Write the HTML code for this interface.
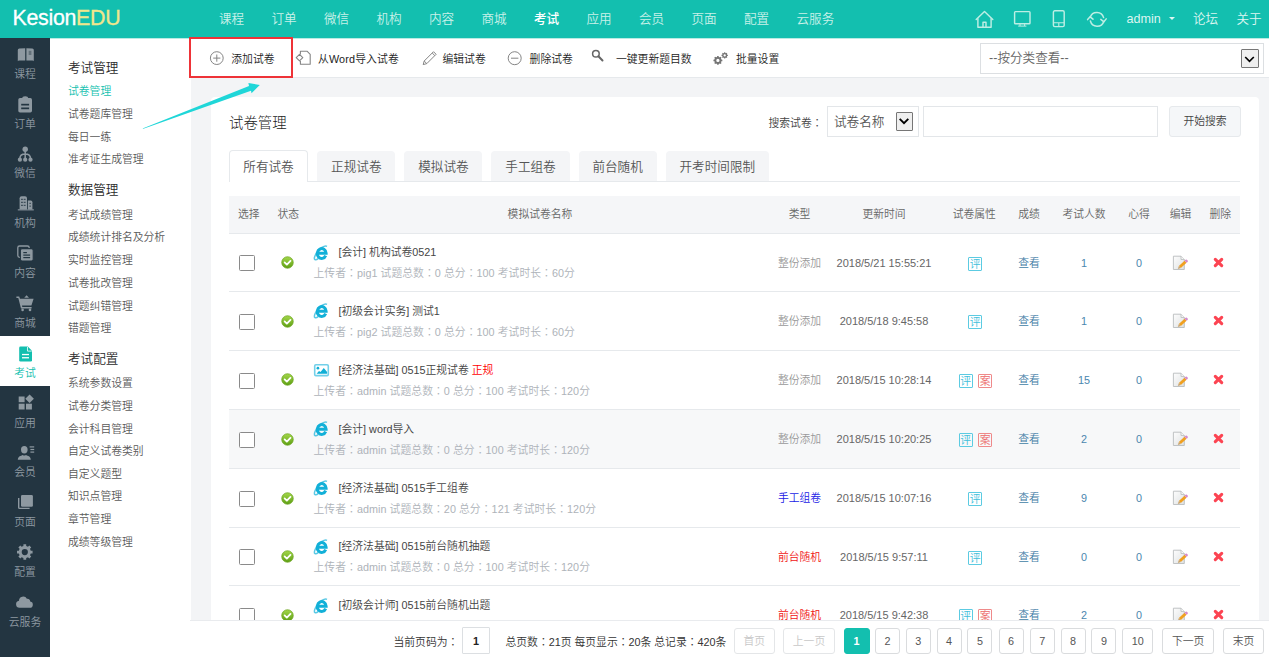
<!DOCTYPE html>
<html lang="zh-CN">
<head>
<meta charset="utf-8">
<title>KesionEDU</title>
<style>
*{box-sizing:border-box;margin:0;padding:0}
html,body{width:1269px;height:657px;overflow:hidden}
body{position:relative;background:#f3f4f6;font-family:"Liberation Sans","Noto Sans CJK SC",sans-serif;font-size:10.8px;color:#333;font-weight:350}
a{text-decoration:none}
i,em{font-style:normal}
/* header */
#hd{position:absolute;left:0;top:0;width:1269px;height:38px;background:#13bfaf;z-index:5}
#logo{position:absolute;left:12.500px;top:0;height:38px;line-height:36.500px;font-size:21.400px;color:#fff;letter-spacing:-.3px;white-space:nowrap;-webkit-text-stroke:.3px}
#logo b{font-weight:400;color:#f0e68c}
.nv{position:absolute;top:0;height:38px;line-height:38px;font-size:12.6px;color:#c9f1e9;white-space:nowrap}
.nv.on{color:#fff;font-weight:500}
.nv.r{color:#dcf6f1}
.hi{position:absolute}
.caret{position:absolute;left:1168.5px;top:17px;width:0;height:0;border-left:3.3px solid transparent;border-right:3.3px solid transparent;border-top:3.6px solid #dcf6f1}
/* left dark bar */
#lb{position:absolute;left:0;top:37px;width:50px;height:620px;background:#233541}
.li{position:absolute;left:0;width:50px;height:50px;text-align:center;color:#8e99a1;font-size:10.8px}
.li span{position:absolute;left:0;width:50px;top:28.700px;line-height:16px}
.li svg{position:absolute;left:0;top:.5px}
.li.on{background:#fff;color:#13bfaf}
/* submenu */
#sm{position:absolute;left:50px;top:38px;width:141px;height:619px;background:#fff}
#sm h3{position:absolute;left:18px;font-size:12.600px;font-weight:350;color:#2a2a2a;line-height:18px;white-space:nowrap}
#sm a{position:absolute;left:18px;font-size:10.800px;color:#5a5a5a;line-height:16px;white-space:nowrap}
#sm a.on{color:#13bfaf}
/* toolbar */
#tb{position:absolute;left:190px;top:38px;width:1079px;height:40px;background:#fff;border-bottom:1px solid #e6e9ec}
.tline{position:absolute;left:-140px;top:0;width:1219px;height:1px;background:#b9ebe3}
#redbox{position:absolute;left:-1px;top:-1px;width:104px;height:41px;border:2px solid #ee3338;z-index:6}
.tic{position:absolute}
.ti{position:absolute;top:0;height:40px;line-height:42px;font-size:10.800px;color:#1c1c1c;font-weight:350;white-space:nowrap}
#catsel{position:absolute;left:790px;top:5px;width:284px;height:31px;border:1px solid #dcdfe2;background:#fff;line-height:29px;padding-left:8px;font-size:12.600px;color:#666}
#catsel .dd{position:absolute;right:4.500px;top:4.500px;width:18px;height:19.500px;border:1px solid #767676;background:#efefef;border-radius:1px}
#catsel .dd svg{position:absolute;left:2.500px;top:6px}
/* panel */
#pn{position:absolute;left:211px;top:97px;width:1048px;height:540px;background:#fff;border-radius:4px 4px 0 0;overflow:hidden}
#ttl{position:absolute;left:18px;top:15px;line-height:22px;font-size:14.400px;color:#222;font-weight:300}
#srch .lbl{position:absolute;left:557.500px;top:16px;line-height:18px;font-size:10.800px;color:#444;white-space:nowrap}
#srch .sel{position:absolute;left:616px;top:8.500px;width:92px;height:31px;border:1px solid #e3e6e9;line-height:31px;padding-left:6px;font-size:12.600px;color:#555}
#srch .sel .dd{position:absolute;left:68.300px;top:5.500px;width:17px;height:19px;border:1px solid #767676;background:#efefef;border-radius:1px}
#srch .sel .dd svg{position:absolute;left:2.200px;top:5px}
#srch .inp{position:absolute;left:711.500px;top:8.500px;width:235px;height:31px;border:1px solid #e3e6e9;background:#fff}
#srch .btn{position:absolute;left:958px;top:8.500px;width:72px;height:31px;border:1px solid #e6e9ec;background:#f5f7f9;border-radius:3px;line-height:29px;text-align:center;font-size:10.800px;color:#444}
#tabs{position:absolute;left:0;top:53px;width:1047px;height:32px}
#tabs:after{content:"";position:absolute;left:18px;top:31px;width:1011px;height:1px;background:#e6e9ec}
.tab{position:absolute;top:.5px;height:30.500px;line-height:33.500px;text-align:center;font-size:12.600px;color:#555;background:#f4f5f7;border-radius:4px 4px 0 0}
.tab.on{background:#fff;border:1px solid #e6e9ec;border-bottom:0;height:32px;z-index:2;line-height:32.500px;top:0}
#th{position:absolute;left:18px;top:99px;width:1011px;height:38px;background:#f5f6f8;border-bottom:1px solid #e6e9ec}
.c{position:absolute;width:80px;text-align:center;white-space:nowrap}
#th .c{top:0;line-height:37px;font-size:10.800px;color:#666}
.row{position:absolute;left:18px;width:1011px;height:59px;border-bottom:1px solid #e6e9ec;background:#fff}
.row.alt{background:#f7f8f9}
.row .c{top:0;line-height:58.400px;font-size:10.800px}
.cb{position:absolute;left:10px;top:21px;width:16px;height:16px;border:1px solid #8a8a8a;border-radius:1.500px;background:#fff}
.ok{position:absolute;left:52px;top:21.800px;width:13px;height:13px}
.ok svg,.ed svg,.dl svg,.fi svg{display:block}
.nm{position:absolute;left:84.500px;top:8.300px;line-height:20px;white-space:nowrap}
.nm .fi{position:absolute;left:-1.500px;top:1.300px}
.nm .t{display:block;padding-left:25px;font-size:10.800px;color:#444;height:20px;line-height:21px}
.nm .t em{color:#f00}
.nm p{font-size:10.800px;color:#aeb3b9;line-height:20px;margin-top:-.300px;letter-spacing:.05px}
.t0{color:#999}.t1{color:#1a1ae6}.t2{color:#f01414}
.dt{color:#666;font-size:11px !important}
.bd{position:absolute;top:22.600px;width:14px;height:14px;border:1px solid;font-size:10.800px;line-height:12px;text-align:center;border-radius:1px;overflow:hidden}
.bd.p{color:#3fc0db;border-color:#5ccbe2}
.bd.a{color:#ec6a6a;border-color:#ef8a8a}
.lk{color:#3f7da6}
.nu{color:#4a86ae}
.ed{position:absolute;left:943px;top:21px}
.dl{position:absolute;left:983.900px;top:23px}
/* footer */
#ft{position:absolute;left:190px;top:620px;width:1079px;height:37px;background:#fff;border-top:1px solid #e9ebee;z-index:4}
.ftx{position:absolute;top:7px;line-height:26px;font-size:10.800px;color:#333;white-space:nowrap}
.pg{position:absolute;top:7px;height:26px;line-height:24px;border:1px solid #dadcde;border-radius:3px;background:#fff;text-align:center;font-size:10.800px;color:#555}
.pg.dis{color:#c8c8c8;border-color:#e4e6e8}
.pg.on{background:#13bfaf;border-color:#13bfaf;color:#fff;font-weight:700}
.k{font-family:"Noto Sans CJK TC","Noto Sans CJK JP",sans-serif}
.pg.cur{top:6px;height:27px;line-height:26px;border-radius:1px;font-weight:700;color:#222;border-color:#dcdfe2}
.in{position:absolute;left:0;width:1011px;height:58px}
</style>
</head>
<body>
<div id="hd">
<div id="logo">Kesion<b>EDU</b></div>
<a class="nv" style="left:219.0px">课程</a>
<a class="nv" style="left:271.5px">订单</a>
<a class="nv" style="left:324.0px">微信</a>
<a class="nv" style="left:376.5px">机构</a>
<a class="nv" style="left:429.0px">内容</a>
<a class="nv" style="left:481.5px">商城</a>
<a class="nv on" style="left:534.0px">考试</a>
<a class="nv" style="left:586.5px">应用</a>
<a class="nv" style="left:639.0px">会员</a>
<a class="nv" style="left:691.5px">页面</a>
<a class="nv" style="left:744.0px">配置</a>
<a class="nv" style="left:796.5px">云服务</a>
<svg class="hi" style="left:974px;top:9px" width="21" height="21" viewBox="0 0 21 21" fill="none" stroke="#bdeee4" stroke-width="1.45" stroke-linejoin="round" stroke-linecap="round"><path d="M2.2 10.6L10.5 2.6l8.3 8"/><path d="M3.9 9.6v8.6h13.2V9.6"/><path d="M9 18.2v-5h3v5"/></svg>
<svg class="hi" style="left:1012px;top:9px" width="21" height="21" viewBox="0 0 21 21" fill="none" stroke="#bdeee4" stroke-width="1.45" stroke-linejoin="round"><rect x="2.6" y="2.6" width="15.4" height="12.2" rx=".8"/><path d="M6.2 17.1h8.2M8 15v2M12.600 15v2" stroke-width="1"/></svg>
<svg class="hi" style="left:1050px;top:9px" width="18" height="21" viewBox="0 0 18 21" fill="none" stroke="#bdeee4" stroke-width="1.45"><rect x="3.4" y="1.8" width="10.8" height="15.8" rx="1.4"/><path d="M3.400 13.700h10.800M8.800 13.700v3.900" stroke-width="1.1"/></svg>
<svg class="hi" style="left:1085px;top:9px" width="24" height="21" viewBox="0 0 24 21" fill="none" stroke="#bdeee4" stroke-width="1.5" stroke-linecap="round" stroke-linejoin="round"><path d="M5.2 8.200A7 7 0 0 1 18.600 8.600"/><path d="M18.800 12.400A7 7 0 0 1 5.400 12"/><path d="M2.600 10.600l2.500-2.800 2.900 2.400"/><path d="M15.800 10.400l3.100 2.400 2.300-2.900"/></svg>

<a class="nv r" style="left:1126.5px">admin</a><i class="caret"></i>
<a class="nv r" style="left:1193px">论坛</a>
<a class="nv r" style="left:1236.5px">关于</a>
</div>
<div id="lb">
<div class="li" style="top:0.0px"><svg width="50" height="30" viewBox="0 0 50 30" fill="#8e99a1"><path d="M17.800 12q0-1.500 1.500-1.600l5.900-.2v12.200l-5.900.2q-1.500.1-1.500.7z"/><path d="M33.800 12q0-1.500-1.500-1.600l-5.900-.2v12.200l5.900.2q1.500.1 1.500.7z"/><rect x="28.700" y="12.800" width="2.700" height="4.200" fill="#233541" opacity=".4"/></svg><span>课程</span></div>
<div class="li" style="top:49.85px"><svg width="50" height="30" viewBox="0 0 50 30" fill="#8e99a1"><rect x="18.300" y="11" width="13.700" height="14.400" rx="1.700"/><path d="M22.200 12.600v-1.200q0-2.200 3-2.200t3 2.200v1.200z"/><rect x="21.200" y="16.800" width="7.900" height="1.700" fill="#233541"/><rect x="21.200" y="20.500" width="7.900" height="1.700" fill="#233541"/></svg><span>订单</span></div>
<div class="li" style="top:99.7px"><svg width="50" height="30" viewBox="0 0 50 30" fill="#8e99a1"><circle cx="25.200" cy="12.300" r="2.700"/><circle cx="19.900" cy="22.700" r="2.100"/><circle cx="25.200" cy="22.700" r="2.100"/><circle cx="30.500" cy="22.700" r="2.100"/><path d="M25.200 14v7M19.900 21.500q0-4.500 5.300-4.500t5.300 4.500" fill="none" stroke="#8e99a1" stroke-width="1.500"/></svg><span>微信</span></div>
<div class="li" style="top:149.55px"><svg width="50" height="30" viewBox="0 0 50 30" fill="#8e99a1"><path d="M19.600 11.200q0-2 2-2h3.400q2 0 2 2v11.400h-7.400z"/><path d="M27.600 13.600h3.200q1.600 0 1.600 1.600v7.400h-4.800z"/><rect x="17.800" y="22.300" width="16" height="1.100"/><g fill="#233541" opacity=".8"><rect x="21" y="11.800" width="1.900" height="1.100"/><rect x="23.700" y="11.800" width="1.900" height="1.100"/><rect x="21" y="14.800" width="1.900" height="1.100"/><rect x="23.700" y="14.800" width="1.900" height="1.100"/><rect x="21" y="17.800" width="1.900" height="1.100"/><rect x="23.700" y="17.800" width="1.900" height="1.100"/><rect x="29.400" y="15.800" width="1.500" height="1.100"/><rect x="29.400" y="18.600" width="1.500" height="1.100"/><rect x="27" y="10" width=".7" height="12.400"/></g></svg><span>机构</span></div>
<div class="li" style="top:199.4px"><svg width="50" height="30" viewBox="0 0 50 30" fill="#8e99a1"><rect x="17.800" y="9" width="11.400" height="11.400" rx="1.800" fill="none" stroke="#8e99a1" stroke-width="1.300"/><rect x="20.400" y="11.600" width="12.800" height="12.500" rx="1.800" stroke="#233541" stroke-width="1.100"/><g fill="#233541"><rect x="23.300" y="15" width="3.600" height="1.200"/><rect x="23.300" y="17.500" width="6.800" height="1.200"/><rect x="23.300" y="20" width="6.800" height="1.200"/></g></svg><span>内容</span></div>
<div class="li" style="top:249.25px"><svg width="50" height="30" viewBox="0 0 50 30" fill="#8e99a1"><path d="M16.400 9.400h2.800l.8 2.400h13.600l-2.200 6.800h-9.400l.3 1.300h9.300v1.500h-10.600l-2.700-10.500h-1.900z"/><circle cx="22.600" cy="22.900" r="1.300"/><circle cx="30" cy="22.900" r="1.300"/><path d="M26.600 8.200l2.400 2.500h-4.800z"/></svg><span>商城</span></div>
<div class="li on" style="top:299.1px"><svg width="50" height="30" viewBox="0 0 50 30" fill="#13bfaf"><path d="M20.500 9.600h7.300l4.200 4.200v9.400q0 1.300-1.300 1.300h-10.200q-1.300 0-1.300-1.300v-12.300q0-1.300 1.300-1.300z"/><path d="M27.500 9.900v4.200h4.200" fill="none" stroke="#fff" stroke-width=".8"/><rect x="22" y="16.900" width="7" height="1.300" fill="#fff"/><rect x="22" y="20.100" width="7" height="1.300" fill="#fff"/></svg><span>考试</span></div>
<div class="li" style="top:348.95px"><svg width="50" height="30" viewBox="0 0 50 30" fill="#8e99a1"><rect x="18.700" y="10.500" width="5.900" height="5.700"/><rect x="18.700" y="17.700" width="5.900" height="5.800"/><rect x="26" y="17.700" width="5.900" height="5.800"/><path d="M29.600 8.500l4.300 4.300-4.300 4.300-4.300-4.300z"/></svg><span>应用</span></div>
<div class="li" style="top:398.8px"><svg width="50" height="30" viewBox="0 0 50 30" fill="#8e99a1"><ellipse cx="24.300" cy="13.700" rx="3.300" ry="3.700"/><path d="M17.800 23.800q0-3.200 3.300-4.100l1.600-.7q1.600 1 3.200 0l1.600.7q3.300.9 3.300 4.100z"/><rect x="29.600" y="10.300" width="4.600" height="1.200"/><rect x="30.400" y="12.900" width="3.800" height="1.200"/><rect x="30.400" y="15.500" width="3.800" height="1.200"/></svg><span>会员</span></div>
<div class="li" style="top:448.65px"><svg width="50" height="30" viewBox="0 0 50 30" fill="#8e99a1"><rect x="21" y="9" width="11.900" height="11.700" rx="1.300"/><path d="M18.700 12v9.500q0 .9.900.9h10" fill="none" stroke="#8e99a1" stroke-width="1.400"/></svg><span>页面</span></div>
<div class="li" style="top:498.5px"><svg width="50" height="30" viewBox="0 0 50 30" fill="#8e99a1"><path fill-rule="evenodd" d="M32.58 14.69L32.58 17.41L30.73 17.47L30.00 19.24L31.26 20.59L29.34 22.51L27.99 21.25L26.22 21.98L26.16 23.83L23.44 23.83L23.38 21.98L21.61 21.25L20.26 22.51L18.34 20.59L19.60 19.24L18.87 17.47L17.02 17.41L17.02 14.69L18.87 14.63L19.60 12.86L18.34 11.51L20.26 9.59L21.61 10.85L23.38 10.12L23.44 8.27L26.16 8.27L26.22 10.12L27.99 10.85L29.34 9.59L31.26 11.51L30.00 12.86L30.73 14.63zM21.70 16.05a3.1 3.1 0 1 0 6.2 0a3.1 3.1 0 1 0 -6.2 0z"/></svg><span>配置</span></div>
<div class="li" style="top:548.35px"><svg width="50" height="30" viewBox="0 0 50 30" fill="#8e99a1"><path d="M19.500 21.800a3.500 3.500 0 0 1-.5-6.950a4.200 4.200 0 0 1 7.900-2.100a3 3 0 0 1 3.300 2.700a3.200 3.200 0 0 1-.6 6.350z"/></svg><span>云服务</span></div>
</div>
<div id="sm">
<h3 style="top:20.7px">考试管理</h3>
<a style="top:45.0px" class=on>试卷管理</a>
<a style="top:67.8px">试卷题库管理</a>
<a style="top:90.6px">每日一练</a>
<a style="top:113.4px">准考证生成管理</a>
<h3 style="top:143.3px">数据管理</h3>
<a style="top:168.5px">考试成绩管理</a>
<a style="top:191.3px">成绩统计排名及分析</a>
<a style="top:214.0px">实时监控管理</a>
<a style="top:236.8px">试卷批改管理</a>
<a style="top:259.5px">试题纠错管理</a>
<a style="top:282.3px">错题管理</a>
<h3 style="top:311.9px">考试配置</h3>
<a style="top:337.2px">系统参数设置</a>
<a style="top:359.8px">试卷分类管理</a>
<a style="top:382.5px">会计科目管理</a>
<a style="top:405.1px">自定义试卷类别</a>
<a style="top:427.8px">自定义题型</a>
<a style="top:450.4px">知识点管理</a>
<a style="top:473.1px">章节管理</a>
<a style="top:495.8px">成绩等级管理</a>
</div>
<div id="tb">
<i class="tline"></i>
<div id="redbox"></div>
<svg class="tic" style="left:18px;top:12px" width="18" height="18" viewBox="0 0 18 18" fill="none" stroke="#858585" stroke-width="1"><circle cx="8.800" cy="8.100" r="6.400"/><path d="M5.200 8.100h7.200M8.800 4.500v7.200"/></svg>
<span class="ti" style="left:41.300px">添加试卷</span>
<svg class="tic" style="left:104px;top:11px" width="20" height="18" viewBox="0 0 20 18" fill="none" stroke="#858585" stroke-width="1.100" stroke-linejoin="round"><path d="M6.400 5.600v-3.400h6.600l3.200 3.200v9.800h-9.800v-3.200"/><path d="M2.200 8.600l3.300-3.300 3.300 3.300-3.300 3.300z"/></svg>
<span class="ti" style="left:128px;letter-spacing:.15px">从Word导入试卷</span>
<svg class="tic" style="left:231px;top:12px" width="18" height="18" viewBox="0 0 18 18" fill="none" stroke="#858585" stroke-width="1" stroke-linejoin="round"><path d="M2.200 14.600l1-3.600 9.300-9.300 2.600 2.600-9.300 9.300z"/><path d="M3.200 11l2.600 2.600M11.200 3l2.600 2.600"/></svg>
<span class="ti" style="left:252.500px">编辑试卷</span>
<svg class="tic" style="left:316px;top:12px" width="18" height="18" viewBox="0 0 18 18" fill="none" stroke="#858585" stroke-width="1"><circle cx="8.700" cy="8.200" r="6.500"/><path d="M5 8.200h7.400"/></svg>
<span class="ti" style="left:339.600px">删除试卷</span>
<svg class="tic" style="left:400px;top:10px" width="16" height="16" viewBox="0 0 16 16" fill="none" stroke="#666" stroke-width="1.500"><circle cx="5.900" cy="5.700" r="3.300"/><path d="M8.400 8.200l4.100 4.300" stroke-width="2" stroke-linecap="round"/></svg>
<span class="ti" style="left:426px">一键更新题目数</span>
<svg class="tic" style="left:522px;top:13px" width="18" height="16" viewBox="0 0 18 16" fill="#757575"><g transform="translate(5.900 9.400) scale(4.500)"><path fill-rule="evenodd" d="M0.99 -0.17L0.99 0.17L0.78 0.19L0.68 0.42L0.82 0.58L0.58 0.82L0.42 0.68L0.19 0.78L0.17 0.99L-0.17 0.99L-0.19 0.78L-0.42 0.68L-0.58 0.82L-0.82 0.58L-0.68 0.42L-0.78 0.19L-0.99 0.17L-0.99 -0.17L-0.78 -0.19L-0.68 -0.42L-0.82 -0.58L-0.58 -0.82L-0.42 -0.68L-0.19 -0.78L-0.17 -0.99L0.17 -0.99L0.19 -0.78L0.42 -0.68L0.58 -0.82L0.82 -0.58L0.68 -0.42L0.78 -0.19zM-0.36 0.00a0.36 0.36 0 1 0 0.72 0a0.36 0.36 0 1 0 -0.72 0z"/></g><g transform="translate(12.700 4.400) scale(3.200)"><path fill-rule="evenodd" d="M0.99 -0.17L0.99 0.17L0.78 0.19L0.68 0.42L0.82 0.58L0.58 0.82L0.42 0.68L0.19 0.78L0.17 0.99L-0.17 0.99L-0.19 0.78L-0.42 0.68L-0.58 0.82L-0.82 0.58L-0.68 0.42L-0.78 0.19L-0.99 0.17L-0.99 -0.17L-0.78 -0.19L-0.68 -0.42L-0.82 -0.58L-0.58 -0.82L-0.42 -0.68L-0.19 -0.78L-0.17 -0.99L0.17 -0.99L0.19 -0.78L0.42 -0.68L0.58 -0.82L0.82 -0.58L0.68 -0.42L0.78 -0.19zM-0.36 0.00a0.36 0.36 0 1 0 0.72 0a0.36 0.36 0 1 0 -0.72 0z"/></g></svg>
<span class="ti" style="left:546px">批量设置</span>
<div id="catsel">--按分类查看--<i class="dd"><svg width="11" height="7" viewBox="0 0 11 7"><path d="M1.200 1l4.300 4.300L9.800 1" fill="none" stroke="#000" stroke-width="1.700"/></svg></i></div>
</div>
<div id="pn">
<div id="ttl">试卷管理</div>
<div id="srch"><span class="lbl">搜索试卷<i class="k" lang="zh-TW">：</i></span><div class="sel">试卷名称<i class="dd"><svg width="10" height="7" viewBox="0 0 10 7"><path d="M.7 .9l4.300 4.300 4.300-4.300" fill="none" stroke="#000" stroke-width="1.900"/></svg></i></div><div class="inp"></div><div class="btn">开始搜索</div></div>
<div id="tabs">
<a class="tab on" style="left:18px;width:79px">所有试卷</a>
<a class="tab" style="left:106.2px;width:78.2px">正规试卷</a>
<a class="tab" style="left:193.3px;width:78.2px">模拟试卷</a>
<a class="tab" style="left:280.4px;width:78.2px">手工组卷</a>
<a class="tab" style="left:367.5px;width:78.2px">前台随机</a>
<a class="tab" style="left:454.6px;width:103.4px">开考时间限制</a>
</div>
<div id="th">
<span class="c" style="left:-20.3px">选择</span>
<span class="c" style="left:19.3px">状态</span>
<span class="c" style="left:271.0px">模拟试卷名称</span>
<span class="c" style="left:530.5px">类型</span>
<span class="c" style="left:615.0px">更新时间</span>
<span class="c" style="left:705.3px">试卷属性</span>
<span class="c" style="left:760.0px">成绩</span>
<span class="c" style="left:815.0px">考试人数</span>
<span class="c" style="left:870.0px">心得</span>
<span class="c" style="left:911.6px">编辑</span>
<span class="c" style="left:951.2px">删除</span>
</div>
<div class="row" style="top:137px;height:58px"><div class="in" style="top:0px">
<i class="cb"></i>
<i class="ok"><svg width="13" height="13" viewBox="0 0 14 14"><defs><linearGradient id="gk" x1="0" y1="0" x2="0" y2="1"><stop offset="0" stop-color="#a4d84a"/><stop offset="1" stop-color="#5d9e14"/></linearGradient></defs><circle cx="7" cy="7" r="6.200" fill="url(#gk)" stroke="#6aa31c" stroke-width=".8"/><path d="M3.900 6.900l2.400 2.400 3.900-4" fill="none" stroke="#fff" stroke-width="1.900" stroke-linecap="round" stroke-linejoin="round"/></svg>
</i>
<div class="nm"><i class="fi"><svg width="17" height="17" viewBox="0 0 17 17"><g fill="none" stroke="#12b0d8"><path d="M13.700 11.600A4.400 4.900 0 1 1 14.100 9.200H5.400" stroke-width="3"/><path d="M15 2.300c-2.400-1.200-7.600 1.900-10.600 6.900c-2 3.400-2.600 5.800-1.500 6.300c.9.400 2.300-.2 3.500-1.200" stroke-width="1.500" opacity=".7"/></g></svg>
</i><span class="t">[会计] 机构试卷0521</span><p>上传者<i class="k" lang="zh-TW">：</i>pig1 试题总数<i class="k" lang="zh-TW">：</i>0 总分<i class="k" lang="zh-TW">：</i>100 考试时长<i class="k" lang="zh-TW">：</i>60分</p></div>
</div>
<span class="c t0" style="left:530.5px">整份添加</span>
<span class="c dt" style="left:595.0px;width:120px">2018/5/21 15:55:21</span>
<i class="bd p" style="left:739.2px">评</i>
<span class="c lk" style="left:760.0px">查看</span>
<span class="c nu" style="left:815.0px">1</span>
<span class="c nu" style="left:870.0px">0</span>
<i class="ed"><svg width="17" height="16" viewBox="0 0 17 16"><defs><linearGradient id="gp" x1="0" y1="0" x2="1" y2="1"><stop offset="0" stop-color="#fdfdfd"/><stop offset="1" stop-color="#dfe2e3"/></linearGradient></defs><path d="M1.400 1.200h7.600l3.300 3.300v10h-10.900z" fill="url(#gp)" stroke="#b9bcbd" stroke-width=".9"/><path d="M9 1.200v3.300h3.300" fill="#f6f6f6" stroke="#b9bcbd" stroke-width=".8"/><path d="M6.900 10.900l5.600-5.200 2 2-5.600 5.300z" fill="#f0a020"/><path d="M12.500 5.700l1.100-1q.7-.5 1.300.1l.8.800q.5.700-.1 1.300l-1.100.9z" fill="#d68ac9"/><path d="M6.900 10.900l2 2.100-3.100 1.100z" fill="#c9a46e"/></svg>
</i>
<i class="dl"><svg width="11" height="11" viewBox="0 0 11 11"><path d="M2.300 2.300l6.400 6.400M8.700 2.300l-6.400 6.400" stroke="#fc4452" stroke-width="3.100" stroke-linecap="round" fill="none"/></svg>
</i>
</div>
<div class="row" style="top:195px;height:59px"><div class="in" style="top:0.8px">
<i class="cb"></i>
<i class="ok"><svg width="13" height="13" viewBox="0 0 14 14"><defs><linearGradient id="gk" x1="0" y1="0" x2="0" y2="1"><stop offset="0" stop-color="#a4d84a"/><stop offset="1" stop-color="#5d9e14"/></linearGradient></defs><circle cx="7" cy="7" r="6.200" fill="url(#gk)" stroke="#6aa31c" stroke-width=".8"/><path d="M3.900 6.900l2.400 2.400 3.900-4" fill="none" stroke="#fff" stroke-width="1.900" stroke-linecap="round" stroke-linejoin="round"/></svg>
</i>
<div class="nm"><i class="fi"><svg width="17" height="17" viewBox="0 0 17 17"><g fill="none" stroke="#12b0d8"><path d="M13.700 11.600A4.400 4.900 0 1 1 14.100 9.200H5.400" stroke-width="3"/><path d="M15 2.300c-2.400-1.200-7.600 1.900-10.600 6.900c-2 3.400-2.600 5.800-1.500 6.300c.9.400 2.300-.2 3.500-1.200" stroke-width="1.500" opacity=".7"/></g></svg>
</i><span class="t">[初级会计实务] 测试1</span><p>上传者<i class="k" lang="zh-TW">：</i>pig2 试题总数<i class="k" lang="zh-TW">：</i>0 总分<i class="k" lang="zh-TW">：</i>100 考试时长<i class="k" lang="zh-TW">：</i>60分</p></div>
</div>
<span class="c t0" style="left:530.5px">整份添加</span>
<span class="c dt" style="left:595.0px;width:120px">2018/5/18 9:45:58</span>
<i class="bd p" style="left:739.2px">评</i>
<span class="c lk" style="left:760.0px">查看</span>
<span class="c nu" style="left:815.0px">1</span>
<span class="c nu" style="left:870.0px">0</span>
<i class="ed"><svg width="17" height="16" viewBox="0 0 17 16"><defs><linearGradient id="gp" x1="0" y1="0" x2="1" y2="1"><stop offset="0" stop-color="#fdfdfd"/><stop offset="1" stop-color="#dfe2e3"/></linearGradient></defs><path d="M1.400 1.200h7.600l3.300 3.300v10h-10.900z" fill="url(#gp)" stroke="#b9bcbd" stroke-width=".9"/><path d="M9 1.200v3.300h3.300" fill="#f6f6f6" stroke="#b9bcbd" stroke-width=".8"/><path d="M6.900 10.900l5.600-5.200 2 2-5.600 5.300z" fill="#f0a020"/><path d="M12.500 5.700l1.100-1q.7-.5 1.300.1l.8.800q.5.700-.1 1.300l-1.100.9z" fill="#d68ac9"/><path d="M6.900 10.900l2 2.100-3.100 1.100z" fill="#c9a46e"/></svg>
</i>
<i class="dl"><svg width="11" height="11" viewBox="0 0 11 11"><path d="M2.300 2.300l6.400 6.400M8.700 2.300l-6.400 6.400" stroke="#fc4452" stroke-width="3.100" stroke-linecap="round" fill="none"/></svg>
</i>
</div>
<div class="row" style="top:254px;height:59px"><div class="in" style="top:0.5px">
<i class="cb"></i>
<i class="ok"><svg width="13" height="13" viewBox="0 0 14 14"><defs><linearGradient id="gk" x1="0" y1="0" x2="0" y2="1"><stop offset="0" stop-color="#a4d84a"/><stop offset="1" stop-color="#5d9e14"/></linearGradient></defs><circle cx="7" cy="7" r="6.200" fill="url(#gk)" stroke="#6aa31c" stroke-width=".8"/><path d="M3.900 6.900l2.400 2.400 3.900-4" fill="none" stroke="#fff" stroke-width="1.900" stroke-linecap="round" stroke-linejoin="round"/></svg>
</i>
<div class="nm"><i class="fi"><svg width="18" height="17" viewBox="0 0 18 17"><g transform="translate(1 1.400)"><rect x="1.700" y="2.400" width="13.600" height="10.800" rx="1.200" fill="#fff" stroke="#72d0e9" stroke-width="1.600"/><path d="M3.600 11.400l2.400-2.700 1.500.9 3.300-3.900 3.300 4v1.700z" fill="#10afd6"/><circle cx="4.900" cy="5.800" r="1.350" fill="#10afd6"/></g></svg>
</i><span class="t">[经济法基础] 0515正规试卷 <em>正规</em></span><p>上传者<i class="k" lang="zh-TW">：</i>admin 试题总数<i class="k" lang="zh-TW">：</i>0 总分<i class="k" lang="zh-TW">：</i>100 考试时长<i class="k" lang="zh-TW">：</i>120分</p></div>
</div>
<span class="c t0" style="left:530.5px">整份添加</span>
<span class="c dt" style="left:595.0px;width:120px">2018/5/15 10:28:14</span>
<i class="bd p" style="left:729.7px">评</i><i class="bd a" style="left:749.2px">案</i>
<span class="c lk" style="left:760.0px">查看</span>
<span class="c nu" style="left:815.0px">15</span>
<span class="c nu" style="left:870.0px">0</span>
<i class="ed"><svg width="17" height="16" viewBox="0 0 17 16"><defs><linearGradient id="gp" x1="0" y1="0" x2="1" y2="1"><stop offset="0" stop-color="#fdfdfd"/><stop offset="1" stop-color="#dfe2e3"/></linearGradient></defs><path d="M1.400 1.200h7.600l3.300 3.300v10h-10.900z" fill="url(#gp)" stroke="#b9bcbd" stroke-width=".9"/><path d="M9 1.200v3.300h3.300" fill="#f6f6f6" stroke="#b9bcbd" stroke-width=".8"/><path d="M6.900 10.900l5.600-5.200 2 2-5.600 5.300z" fill="#f0a020"/><path d="M12.500 5.700l1.100-1q.7-.5 1.300.1l.8.800q.5.700-.1 1.300l-1.100.9z" fill="#d68ac9"/><path d="M6.900 10.900l2 2.100-3.100 1.100z" fill="#c9a46e"/></svg>
</i>
<i class="dl"><svg width="11" height="11" viewBox="0 0 11 11"><path d="M2.300 2.300l6.400 6.400M8.700 2.300l-6.400 6.400" stroke="#fc4452" stroke-width="3.100" stroke-linecap="round" fill="none"/></svg>
</i>
</div>
<div class="row alt" style="top:313px;height:59px"><div class="in" style="top:0.8px">
<i class="cb"></i>
<i class="ok"><svg width="13" height="13" viewBox="0 0 14 14"><defs><linearGradient id="gk" x1="0" y1="0" x2="0" y2="1"><stop offset="0" stop-color="#a4d84a"/><stop offset="1" stop-color="#5d9e14"/></linearGradient></defs><circle cx="7" cy="7" r="6.200" fill="url(#gk)" stroke="#6aa31c" stroke-width=".8"/><path d="M3.900 6.900l2.400 2.400 3.900-4" fill="none" stroke="#fff" stroke-width="1.900" stroke-linecap="round" stroke-linejoin="round"/></svg>
</i>
<div class="nm"><i class="fi"><svg width="17" height="17" viewBox="0 0 17 17"><g fill="none" stroke="#12b0d8"><path d="M13.700 11.600A4.400 4.900 0 1 1 14.100 9.200H5.400" stroke-width="3"/><path d="M15 2.300c-2.400-1.200-7.600 1.900-10.600 6.900c-2 3.400-2.600 5.800-1.500 6.300c.9.400 2.300-.2 3.500-1.200" stroke-width="1.500" opacity=".7"/></g></svg>
</i><span class="t">[会计] word导入</span><p>上传者<i class="k" lang="zh-TW">：</i>admin 试题总数<i class="k" lang="zh-TW">：</i>0 总分<i class="k" lang="zh-TW">：</i>100 考试时长<i class="k" lang="zh-TW">：</i>120分</p></div>
</div>
<span class="c t0" style="left:530.5px">整份添加</span>
<span class="c dt" style="left:595.0px;width:120px">2018/5/15 10:20:25</span>
<i class="bd p" style="left:729.7px">评</i><i class="bd a" style="left:749.2px">案</i>
<span class="c lk" style="left:760.0px">查看</span>
<span class="c nu" style="left:815.0px">2</span>
<span class="c nu" style="left:870.0px">0</span>
<i class="ed"><svg width="17" height="16" viewBox="0 0 17 16"><defs><linearGradient id="gp" x1="0" y1="0" x2="1" y2="1"><stop offset="0" stop-color="#fdfdfd"/><stop offset="1" stop-color="#dfe2e3"/></linearGradient></defs><path d="M1.400 1.200h7.600l3.300 3.300v10h-10.900z" fill="url(#gp)" stroke="#b9bcbd" stroke-width=".9"/><path d="M9 1.200v3.300h3.300" fill="#f6f6f6" stroke="#b9bcbd" stroke-width=".8"/><path d="M6.900 10.900l5.600-5.200 2 2-5.600 5.300z" fill="#f0a020"/><path d="M12.500 5.700l1.100-1q.7-.5 1.300.1l.8.800q.5.700-.1 1.300l-1.100.9z" fill="#d68ac9"/><path d="M6.900 10.900l2 2.100-3.100 1.100z" fill="#c9a46e"/></svg>
</i>
<i class="dl"><svg width="11" height="11" viewBox="0 0 11 11"><path d="M2.300 2.300l6.400 6.400M8.700 2.300l-6.400 6.400" stroke="#fc4452" stroke-width="3.100" stroke-linecap="round" fill="none"/></svg>
</i>
</div>
<div class="row" style="top:372px;height:59px"><div class="in" style="top:0.8px">
<i class="cb"></i>
<i class="ok"><svg width="13" height="13" viewBox="0 0 14 14"><defs><linearGradient id="gk" x1="0" y1="0" x2="0" y2="1"><stop offset="0" stop-color="#a4d84a"/><stop offset="1" stop-color="#5d9e14"/></linearGradient></defs><circle cx="7" cy="7" r="6.200" fill="url(#gk)" stroke="#6aa31c" stroke-width=".8"/><path d="M3.900 6.900l2.400 2.400 3.900-4" fill="none" stroke="#fff" stroke-width="1.900" stroke-linecap="round" stroke-linejoin="round"/></svg>
</i>
<div class="nm"><i class="fi"><svg width="17" height="17" viewBox="0 0 17 17"><g fill="none" stroke="#12b0d8"><path d="M13.700 11.600A4.400 4.900 0 1 1 14.100 9.200H5.400" stroke-width="3"/><path d="M15 2.300c-2.400-1.200-7.600 1.900-10.600 6.900c-2 3.400-2.600 5.800-1.500 6.300c.9.400 2.300-.2 3.500-1.200" stroke-width="1.500" opacity=".7"/></g></svg>
</i><span class="t">[经济法基础] 0515手工组卷</span><p>上传者<i class="k" lang="zh-TW">：</i>admin 试题总数<i class="k" lang="zh-TW">：</i>20 总分<i class="k" lang="zh-TW">：</i>121 考试时长<i class="k" lang="zh-TW">：</i>120分</p></div>
</div>
<span class="c t1" style="left:530.5px">手工组卷</span>
<span class="c dt" style="left:595.0px;width:120px">2018/5/15 10:07:16</span>
<i class="bd p" style="left:739.2px">评</i>
<span class="c lk" style="left:760.0px">查看</span>
<span class="c nu" style="left:815.0px">9</span>
<span class="c nu" style="left:870.0px">0</span>
<i class="ed"><svg width="17" height="16" viewBox="0 0 17 16"><defs><linearGradient id="gp" x1="0" y1="0" x2="1" y2="1"><stop offset="0" stop-color="#fdfdfd"/><stop offset="1" stop-color="#dfe2e3"/></linearGradient></defs><path d="M1.400 1.200h7.600l3.300 3.300v10h-10.900z" fill="url(#gp)" stroke="#b9bcbd" stroke-width=".9"/><path d="M9 1.200v3.300h3.300" fill="#f6f6f6" stroke="#b9bcbd" stroke-width=".8"/><path d="M6.900 10.900l5.600-5.200 2 2-5.600 5.300z" fill="#f0a020"/><path d="M12.500 5.700l1.100-1q.7-.5 1.300.1l.8.800q.5.700-.1 1.300l-1.100.9z" fill="#d68ac9"/><path d="M6.900 10.900l2 2.100-3.100 1.100z" fill="#c9a46e"/></svg>
</i>
<i class="dl"><svg width="11" height="11" viewBox="0 0 11 11"><path d="M2.300 2.300l6.400 6.400M8.700 2.300l-6.400 6.400" stroke="#fc4452" stroke-width="3.100" stroke-linecap="round" fill="none"/></svg>
</i>
</div>
<div class="row" style="top:431px;height:58px"><div class="in" style="top:0.1px">
<i class="cb"></i>
<i class="ok"><svg width="13" height="13" viewBox="0 0 14 14"><defs><linearGradient id="gk" x1="0" y1="0" x2="0" y2="1"><stop offset="0" stop-color="#a4d84a"/><stop offset="1" stop-color="#5d9e14"/></linearGradient></defs><circle cx="7" cy="7" r="6.200" fill="url(#gk)" stroke="#6aa31c" stroke-width=".8"/><path d="M3.900 6.900l2.400 2.400 3.900-4" fill="none" stroke="#fff" stroke-width="1.900" stroke-linecap="round" stroke-linejoin="round"/></svg>
</i>
<div class="nm"><i class="fi"><svg width="17" height="17" viewBox="0 0 17 17"><g fill="none" stroke="#12b0d8"><path d="M13.700 11.600A4.400 4.900 0 1 1 14.100 9.200H5.400" stroke-width="3"/><path d="M15 2.300c-2.400-1.200-7.600 1.900-10.600 6.900c-2 3.400-2.600 5.800-1.500 6.300c.9.400 2.300-.2 3.500-1.200" stroke-width="1.500" opacity=".7"/></g></svg>
</i><span class="t">[经济法基础] 0515前台随机抽题</span><p>上传者<i class="k" lang="zh-TW">：</i>admin 试题总数<i class="k" lang="zh-TW">：</i>0 总分<i class="k" lang="zh-TW">：</i>100 考试时长<i class="k" lang="zh-TW">：</i>120分</p></div>
</div>
<span class="c t2" style="left:530.5px">前台随机</span>
<span class="c dt" style="left:595.0px;width:120px">2018/5/15 9:57:11</span>
<i class="bd p" style="left:739.2px">评</i>
<span class="c lk" style="left:760.0px">查看</span>
<span class="c nu" style="left:815.0px">0</span>
<span class="c nu" style="left:870.0px">0</span>
<i class="ed"><svg width="17" height="16" viewBox="0 0 17 16"><defs><linearGradient id="gp" x1="0" y1="0" x2="1" y2="1"><stop offset="0" stop-color="#fdfdfd"/><stop offset="1" stop-color="#dfe2e3"/></linearGradient></defs><path d="M1.400 1.200h7.600l3.300 3.300v10h-10.900z" fill="url(#gp)" stroke="#b9bcbd" stroke-width=".9"/><path d="M9 1.200v3.300h3.300" fill="#f6f6f6" stroke="#b9bcbd" stroke-width=".8"/><path d="M6.900 10.900l5.600-5.200 2 2-5.600 5.300z" fill="#f0a020"/><path d="M12.500 5.700l1.100-1q.7-.5 1.300.1l.8.800q.5.700-.1 1.300l-1.100.9z" fill="#d68ac9"/><path d="M6.900 10.900l2 2.100-3.100 1.100z" fill="#c9a46e"/></svg>
</i>
<i class="dl"><svg width="11" height="11" viewBox="0 0 11 11"><path d="M2.300 2.300l6.400 6.400M8.700 2.300l-6.400 6.400" stroke="#fc4452" stroke-width="3.100" stroke-linecap="round" fill="none"/></svg>
</i>
</div>
<div class="row" style="top:489px;height:59px"><div class="in" style="top:1.1px">
<i class="cb"></i>
<i class="ok"><svg width="13" height="13" viewBox="0 0 14 14"><defs><linearGradient id="gk" x1="0" y1="0" x2="0" y2="1"><stop offset="0" stop-color="#a4d84a"/><stop offset="1" stop-color="#5d9e14"/></linearGradient></defs><circle cx="7" cy="7" r="6.200" fill="url(#gk)" stroke="#6aa31c" stroke-width=".8"/><path d="M3.900 6.900l2.400 2.400 3.900-4" fill="none" stroke="#fff" stroke-width="1.900" stroke-linecap="round" stroke-linejoin="round"/></svg>
</i>
<div class="nm"><i class="fi"><svg width="17" height="17" viewBox="0 0 17 17"><g fill="none" stroke="#12b0d8"><path d="M13.700 11.600A4.400 4.900 0 1 1 14.100 9.200H5.400" stroke-width="3"/><path d="M15 2.300c-2.400-1.200-7.600 1.900-10.600 6.900c-2 3.400-2.600 5.800-1.500 6.300c.9.400 2.300-.2 3.500-1.200" stroke-width="1.500" opacity=".7"/></g></svg>
</i><span class="t">[初级会计师] 0515前台随机出题</span><p>上传者<i class="k" lang="zh-TW">：</i>admin 试题总数<i class="k" lang="zh-TW">：</i>0 总分<i class="k" lang="zh-TW">：</i>100 考试时长<i class="k" lang="zh-TW">：</i>120分</p></div>
</div>
<span class="c t2" style="left:530.5px">前台随机</span>
<span class="c dt" style="left:595.0px;width:120px">2018/5/15 9:42:38</span>
<i class="bd p" style="left:729.7px">评</i><i class="bd a" style="left:749.2px">案</i>
<span class="c lk" style="left:760.0px">查看</span>
<span class="c nu" style="left:815.0px">2</span>
<span class="c nu" style="left:870.0px">0</span>
<i class="ed"><svg width="17" height="16" viewBox="0 0 17 16"><defs><linearGradient id="gp" x1="0" y1="0" x2="1" y2="1"><stop offset="0" stop-color="#fdfdfd"/><stop offset="1" stop-color="#dfe2e3"/></linearGradient></defs><path d="M1.400 1.200h7.600l3.300 3.300v10h-10.900z" fill="url(#gp)" stroke="#b9bcbd" stroke-width=".9"/><path d="M9 1.200v3.300h3.300" fill="#f6f6f6" stroke="#b9bcbd" stroke-width=".8"/><path d="M6.900 10.900l5.600-5.200 2 2-5.600 5.300z" fill="#f0a020"/><path d="M12.500 5.700l1.100-1q.7-.5 1.300.1l.8.800q.5.700-.1 1.300l-1.100.9z" fill="#d68ac9"/><path d="M6.900 10.900l2 2.100-3.100 1.100z" fill="#c9a46e"/></svg>
</i>
<i class="dl"><svg width="11" height="11" viewBox="0 0 11 11"><path d="M2.300 2.300l6.400 6.400M8.700 2.300l-6.400 6.400" stroke="#fc4452" stroke-width="3.100" stroke-linecap="round" fill="none"/></svg>
</i>
</div>
</div>
<div id="ft">
<span class="ftx" style="left:203.5px">当前页码为<i class="k" lang="zh-TW">：</i></span><span class="pg cur" style="left:272px;width:28px">1</span>
<span class="ftx" style="left:315.5px">总页数<i class="k" lang="zh-TW">：</i>21页 每页显示<i class="k" lang="zh-TW">：</i>20条 总记录<i class="k" lang="zh-TW">：</i>420条</span>
<a class="pg dis" style="left:543.5px;width:41.5px">首页</a>
<a class="pg dis" style="left:593.0px;width:52.0px">上一页</a>
<a class="pg on" style="left:653.5px;width:26.0px">1</a>
<a class="pg " style="left:685.0px;width:25.0px">2</a>
<a class="pg " style="left:715.8px;width:25.0px">3</a>
<a class="pg " style="left:746.6px;width:25.0px">4</a>
<a class="pg " style="left:777.4px;width:25.0px">5</a>
<a class="pg " style="left:808.6px;width:25.0px">6</a>
<a class="pg " style="left:839.8px;width:25.0px">7</a>
<a class="pg " style="left:870.6px;width:25.0px">8</a>
<a class="pg " style="left:901.4px;width:25.0px">9</a>
<a class="pg " style="left:932.2px;width:31.0px">10</a>
<a class="pg " style="left:972.3px;width:51.7px">下一页</a>
<a class="pg " style="left:1033.0px;width:41.0px">末页</a>
</div>
<svg id="arrow" width="130" height="60" viewBox="0 0 130 60" style="position:absolute;left:140px;top:76px;z-index:7"><path d="M2.700 53L3.200 52.200 109 9.900 108.400 7.100 119.800 9 111.500 17.300 111 14.800z" fill="#1fd6d8"/></svg>
</body>
</html>
